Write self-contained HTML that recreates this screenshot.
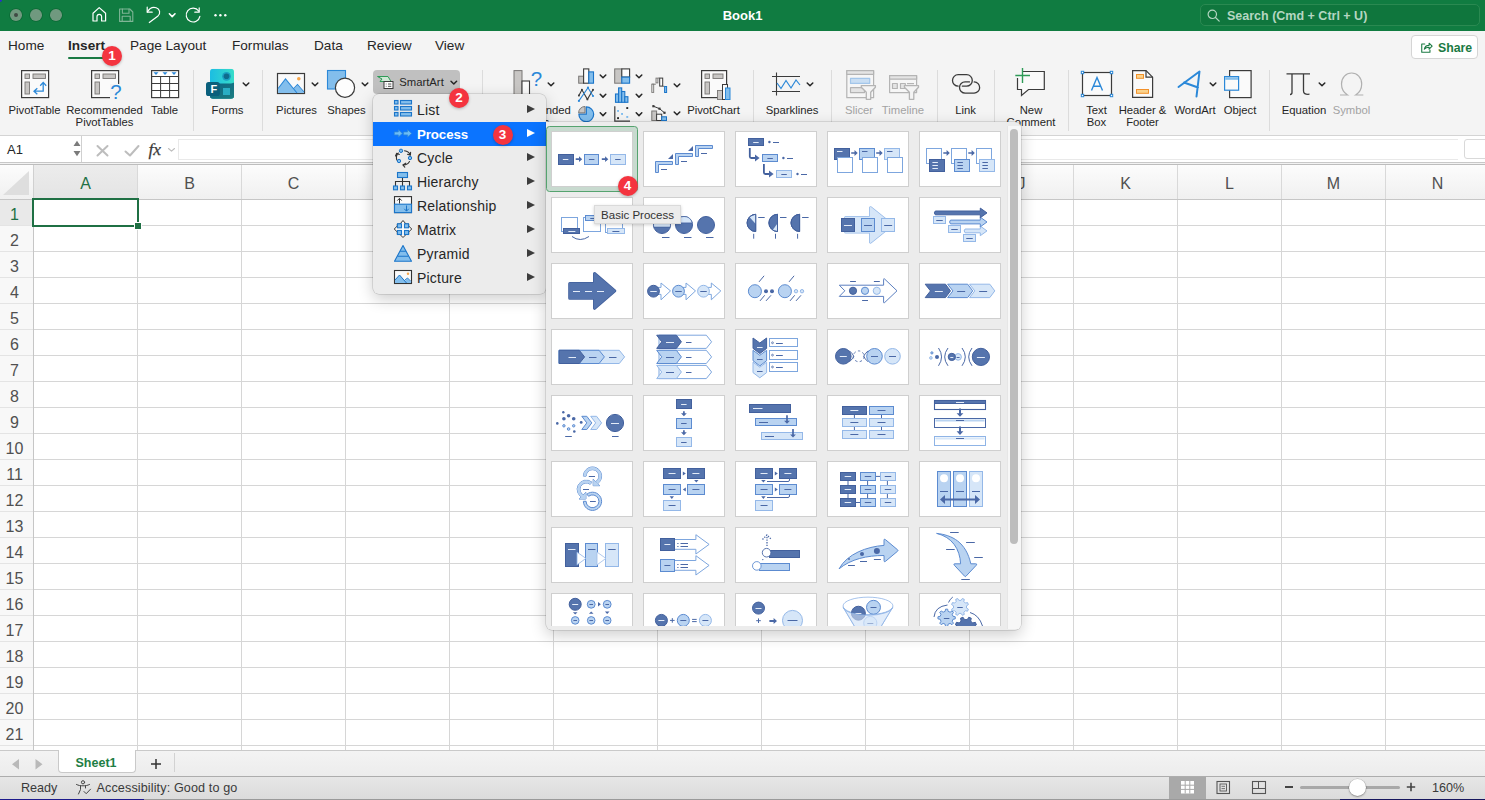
<!DOCTYPE html>
<html lang="en">
<head>
<meta charset="utf-8">
<title>Book1</title>
<style>
*{box-sizing:border-box;margin:0;padding:0}
html,body{width:1485px;height:800px;overflow:hidden;background:#f4f4f4}
body{font-family:"Liberation Sans",sans-serif;color:#262626;position:relative;font-size:12px}
.abs{position:absolute}
#titlebar{position:absolute;left:0;top:0;width:1485px;height:31px;background:#107c41}
#titlebar .tl{position:absolute;top:10px;width:11px;height:11px;border-radius:50%;background:#6f9c80}
#title{position:absolute;left:0;width:1485px;top:8px;text-align:center;color:#fff;font-weight:bold;font-size:13px;line-height:15px}
#search{position:absolute;left:1200px;top:4px;width:280px;height:22px;border-radius:5px;background:#0f763d;border:1px solid #2a8951}
#search span{position:absolute;left:26px;top:3.800px;font-size:12.5px;line-height:15px;font-weight:bold;color:#b5d6c2}
#tabs{position:absolute;left:0;top:31px;width:1485px;height:32px;background:#f4f4f4}
#tabs .t{position:absolute;top:7px;font-size:13.6px;line-height:16px;color:#262626;white-space:nowrap}
#ribbon{position:absolute;left:0;top:63px;width:1485px;height:73px;background:#f4f4f4;border-bottom:1px solid #d4d4d4}
.rl{position:absolute;font-size:11.3px;line-height:12px;color:#262626;text-align:center;white-space:nowrap;transform:translateX(-50%)}
.rl.dis{color:#a3a3a3}
.sep{position:absolute;top:70px;width:1px;height:61px;background:#dcdcdc}
.badge{position:absolute;width:20px;height:20px;margin:-.5px 0 0 -.5px;border-radius:50%;background:#f4343f;color:#fff;font-weight:bold;font-size:13.5px;line-height:20px;text-align:center;box-shadow:0 1px 3px rgba(0,0,0,.25)}
#fbar{position:absolute;left:0;top:136px;width:1485px;height:26px;background:#fff}
#namebox{position:absolute;left:0;top:0;width:82px;height:26px;background:#fff;border-right:1px solid #d0d0d0}
#namebox span{position:absolute;left:7px;top:5.5px;font-size:13px;line-height:15px;color:#262626}
#finput{position:absolute;left:178px;top:1px;width:1307px;height:25px;background:#fff;border-left:1px solid #dcdcdc}
#grid{position:absolute;left:0;top:165px;width:1485px;height:585px;background:#fff;overflow:hidden}
#colhdr{position:absolute;left:0;top:0;width:1485px;height:35px;background:linear-gradient(#fcfcfc,#f0f0f0);border-bottom:1px solid #c6c6c6}
#rowhdr{position:absolute;left:0;top:35px;width:34px;height:551px;background:#f8f8f8;border-right:1px solid #c6c6c6}
.ch{position:absolute;top:0;height:34px;width:104px;border-right:1px solid #d9d9d9;text-align:center;font-size:16px;line-height:38px;color:#505050}
.rh{position:absolute;left:0;width:33px;height:26px;border-bottom:1px solid #e4e4e4;text-align:center;text-indent:-4px;font-size:16px;line-height:29px;color:#505050}
#cells{position:absolute;left:34px;top:35px;width:1452px;height:551px;background-image:linear-gradient(to right,transparent 103px,#d6d6d6 103px),linear-gradient(to bottom,transparent 25px,#d6d6d6 25px);background-size:104px 26px,104px 26px}
#sel{position:absolute;left:32px;top:33px;width:107px;height:28.500px;border:2px solid #1f7044}
#selh{position:absolute;left:135px;top:58px;width:6px;height:6px;background:#1f7044;border:1px solid #fff;box-sizing:content-box;margin:-1px}
#sheetbar{position:absolute;left:0;top:750px;width:1485px;height:26px;background:linear-gradient(#f3f3f3,#ececec);border-top:1px solid #c9c9c9}
#sheettab{position:absolute;left:58px;top:-1px;width:78px;height:23px;background:#fff;border:1px solid #c9c9c9;border-top:none;border-radius:0 0 4px 4px;text-align:center;color:#1e7e45;font-weight:bold;font-size:12.5px;line-height:26px;text-indent:-2px}
#status{position:absolute;left:0;top:776px;width:1485px;height:24px;background:linear-gradient(#e6e6e6,#dbdbdb);border-top:1px solid #adadad}
#status .s{position:absolute;top:4px;font-size:12.6px;color:#4e4e4e;line-height:15px;color:#3a3a3a;white-space:nowrap}
#menu{position:absolute;left:373px;top:94px;width:173px;height:200px;background:#ececec;border-radius:6px;box-shadow:0 0 0 .5px rgba(0,0,0,.2),0 5px 16px rgba(0,0,0,.2)}
.mi{position:absolute;left:0;width:173px;height:24px}
.mi .lbl{position:absolute;left:44px;top:4px;font-size:14px;letter-spacing:.2px;line-height:17px;color:#262626;white-space:nowrap}
.mi .arr{position:absolute;left:154px;top:6.500px;width:0;height:0;border-left:8.700px solid #3d3d3d;border-top:4.700px solid transparent;border-bottom:4.700px solid transparent}
.mi.on{background:#0b74ff}
.mi.on .lbl{color:#fff;font-weight:bold;font-size:13.3px;letter-spacing:-.1px}
.mi.on .arr{border-left-color:#fff}
.mi svg{position:absolute;left:19px;top:2px}
#gal{position:absolute;left:546px;top:122px;width:475px;height:508px;background:#ececec;border-radius:0 6px 6px 6px;box-shadow:0 0 0 .5px rgba(0,0,0,.2),0 5px 16px rgba(0,0,0,.2);overflow:hidden}
.th{position:absolute;width:82px;height:56px;background:#fff;border:1px solid #cfcfcf}
.th svg{position:absolute;left:-1px;top:-1px}
#selth{position:absolute;left:0;top:1px;width:92px;height:66px;border-radius:3.500px;background:#c8dacf;border:1px solid #55a36f}
#sb{position:absolute;left:464px;top:7px;width:8px;height:415px;border-radius:4px;background:#bdbdbd}
#tip{position:absolute;left:594px;top:205px;width:87px;height:19px;background:#ececec;border:1px solid #dadada;box-shadow:0 1px 3px rgba(0,0,0,.18);font-size:11.5px;line-height:18px;color:#333;text-align:center;white-space:nowrap}
.D{fill:#5574ad;stroke:#42609d;stroke-width:1}
.M{fill:#b9d3f1;stroke:#5c8bd0;stroke-width:1}
.L{fill:#d6e6f8;stroke:#94b8e8;stroke-width:1}
.W{fill:#fff;stroke:#7da6de;stroke-width:1}
.k{fill:none;stroke:#4a68a6;stroke-width:1}
.k2{fill:none;stroke:#42609d;stroke-width:1.8}
.kw{fill:none;stroke:#e4ecf8;stroke-width:1}
.kf{fill:#4a68a6;stroke:none}
</style>
</head>
<body>
<div id="titlebar">
  <div class="tl" style="left:10.200px;top:9.200px;width:11.600px;height:11.600px;background:#70997f;box-shadow:0 0 0 .8px #0b6a35"><i style="position:absolute;left:3.800px;top:3.800px;width:4px;height:4px;border-radius:50%;background:#404a44"></i></div>
  <div class="tl" style="left:30.200px;top:9.200px;width:11.600px;height:11.600px;background:#70997f;box-shadow:0 0 0 .8px #0b6a35"></div>
  <div class="tl" style="left:50.200px;top:9.200px;width:11.600px;height:11.600px;background:#70997f;box-shadow:0 0 0 .8px #0b6a35"></div>
  <div class="abs" style="left:0;top:0;width:2px;height:2px;background:#2b2bd0;border-bottom-right-radius:2px"></div>
  <svg class="abs" style="left:88px;top:4px" width="144" height="24" viewBox="88 4 144 24" fill="none" stroke="#fff" stroke-width="1.200" stroke-linecap="round" stroke-linejoin="round">
    <path d="M93 21V13.2L99.2 7.6L105.6 13.2V21H101.6V16.6a2.3 2.3 0 0 0-4.6 0V21Z"/>
    <g stroke="#7fb596" stroke-width="1.1"><path d="M119.6 9h10.2l3 3v9.4h-13.2Z"/><path d="M122.4 9v4.2h6.6V9M122.2 21.4v-5.2h8v5.2"/></g>
    <path d="M147.200 7.200V12.200H152.200"/><path d="M147.400 12C149.600 8 153 6.700 156.200 7.700C160 9 160.800 13.200 158 15.900L149.300 22.500"/>
    <path d="M169.400 13.800l2.800 2.800l2.800-2.800" stroke-width="1.6"/>
    <path d="M199.200 7.900V12.200H194.800"/><path d="M199.900 16.400A6.900 6.900 0 1 1 198.700 11"/>
    <g fill="#fff" stroke="none"><circle cx="215.500" cy="15.200" r="1.200"/><circle cx="220.400" cy="15.200" r="1.200"/><circle cx="225.300" cy="15.200" r="1.200"/></g>
  </svg>
  <div id="title">Book1</div>
  <div id="search"><svg class="abs" style="left:4.500px;top:3px" width="16" height="16" viewBox="0 0 16 16" fill="none" stroke="#b5d6c2" stroke-width="1.200" stroke-linecap="round"><circle cx="6.300" cy="6.300" r="4.200"/><path d="M9.500 9.500l3.700 3.700"/></svg><span>Search (Cmd + Ctrl + U)</span></div>
</div>
<div id="tabs">
  <div class="t" style="left:8px">Home</div>
  <div class="t" style="left:68px;font-weight:bold">Insert</div>
  <div class="abs" style="left:68px;top:25.500px;width:38px;height:2.800px;border-radius:2px;background:#1a7a43"></div>
  <div class="t" style="left:130px">Page Layout</div>
  <div class="t" style="left:232px">Formulas</div>
  <div class="t" style="left:314px">Data</div>
  <div class="t" style="left:367px">Review</div>
  <div class="t" style="left:435px">View</div>
  <div class="abs" style="left:1411px;top:4px;width:67px;height:24px;background:#fff;border:1px solid #d5d5d5;border-radius:4px">
    <svg class="abs" style="left:8px;top:5px" width="13" height="13" viewBox="0 0 15 15" fill="none" stroke="#1a7a43" stroke-width="1.250" stroke-linejoin="round" stroke-linecap="round"><path d="M5.500 3.500H2v9.500h9.500V10.500"/><path d="M5 9.500c.5-3 2.500-4.500 5.500-4.500V2.500l3.500 3.500l-3.500 3.500V7.200C8 7.200 6.200 8 5 9.500Z"/></svg>
    <span class="abs" style="left:26px;top:4.500px;font-size:12.300px;line-height:15px;font-weight:bold;color:#1a7a43">Share</span>
  </div>
</div>
<div id="ribbon"></div>
<div class="abs" style="left:373px;top:70px;width:87px;height:24px;border-radius:4px;background:#c0c0c0"></div>
<svg class="abs" style="left:0;top:62px" width="1485" height="72" viewBox="0 62 1485 72" fill="none">
<!-- PivotTable -->
<g stroke="#3b3b3b" stroke-width="1.2">
<rect x="21.600" y="70.600" width="27" height="27" fill="#fafafa"/>
<rect x="91.600" y="70.600" width="27" height="27" fill="#fafafa"/>
<rect x="701.600" y="70.600" width="25" height="27" fill="#fafafa"/>
</g>
<g fill="#c8c6c4" stroke="#797775" stroke-width=".9">
<rect x="25" y="74" width="4.500" height="4.500"/><rect x="33" y="74" width="12.500" height="4.500"/><rect x="25" y="82" width="4.500" height="12"/>
<rect x="95" y="74" width="4.500" height="4.500"/><rect x="103" y="74" width="12.500" height="4.500"/><rect x="95" y="82" width="4.500" height="12"/>
<rect x="705" y="74" width="4.500" height="4.500"/><rect x="713" y="74" width="10" height="4.500"/><rect x="705" y="82" width="4.500" height="12"/>
</g>
<path d="M34.200 91.200H43.200V82.600M37.300 88.200L34 91.200L37.300 94.300M40.200 85.700L43.200 82.400L46.200 85.700" stroke="#2b88d8" stroke-width="1.300"/>
<rect x="110" y="84" width="14" height="16" fill="#f4f4f4"/>
<text x="110.200" y="99.300" font-family="Liberation Sans, sans-serif" font-size="20.500" fill="#2b88d8">?</text>
<!-- Table -->
<rect x="151.600" y="70.600" width="27" height="27" fill="#fff" stroke="#3b3b3b" stroke-width="1.200"/>
<path d="M151.600 76.500H178.600M151.600 83.500H178.600M151.600 90.500H178.600M160.600 76.500V97.600M169.600 76.500V97.600" stroke="#3b3b3b" stroke-width="1"/>
<path d="M153.500 72.300h5l-2.500 2.800zM162.500 72.300h5l-2.500 2.800zM171.500 72.300h5l-2.500 2.800z" fill="#2b88d8"/>
<!-- Forms -->
<defs><linearGradient id="fg1" x1="0" y1="0" x2="1" y2="0"><stop offset="0" stop-color="#1cbde2"/><stop offset="1" stop-color="#37dcc9"/></linearGradient><linearGradient id="fg2" x1="0" y1="0" x2="1" y2="1"><stop offset="0" stop-color="#0b6485"/><stop offset="1" stop-color="#1b7d80"/></linearGradient><clipPath id="fc"><rect x="210" y="68.800" width="24" height="30" rx="3.200"/></clipPath></defs>
<g clip-path="url(#fc)"><rect x="210" y="68.800" width="24" height="30" fill="url(#fg1)"/><path d="M210 84H234V82.600L230 84.500H210V98.800H234V84Z" fill="url(#fg2)"/><rect x="210" y="83.500" width="24" height="15.300" fill="url(#fg2)"/></g>
<circle cx="226.500" cy="76.300" r="4.400" fill="#1a9fc2"/><circle cx="226.500" cy="76.300" r="2.800" fill="#0e6b8d"/>
<rect x="223" y="88" width="7" height="7" fill="#29aec4"/>
<rect x="206" y="82" width="13.800" height="14" rx="2.600" fill="#0a5f7c"/>
<text x="210.600" y="93.200" font-family="Liberation Sans, sans-serif" font-weight="bold" font-size="11" fill="#fff">F</text>
<!-- Pictures -->
<rect x="277.500" y="73.500" width="27" height="20" fill="#fafafa" stroke="#3b3b3b" stroke-width="1.200"/>
<path d="M278.100 88.500L285.500 79L294 89.500L297.500 85L304 92.800V93H278.100Z" fill="#83beec"/>
<path d="M278.100 88.500L285.500 79L297 93M293.500 88.800L297.500 84.500L304 92" stroke="#2b88d8" stroke-width="1.100"/>
<circle cx="298.800" cy="78.800" r="1.800" fill="#f7a64a"/>
<!-- Shapes -->
<rect x="327.500" y="70.500" width="18" height="18.500" fill="#83beec" stroke="#2b88d8" stroke-width="1.100"/>
<circle cx="345" cy="87.700" r="9.600" fill="#fdfdfd" stroke="#3b3b3b" stroke-width="1.200"/>
<!-- SmartArt -->
<path d="M377.500 76.500H388L391 81.500H380L382 79Z" fill="#cfe8d6" stroke="#2e9b57" stroke-width="1"/>
<rect x="384" y="81.500" width="9" height="7" fill="#fff" stroke="#3b3b3b" stroke-width="1"/>
<path d="M385.800 84H386.500M388 84H391.300M385.800 86.300H386.500M388 86.300H391.300" stroke="#3b3b3b" stroke-width=".9"/>
<!-- chevrons -->
<g stroke="#262626" stroke-width="1.500" stroke-linecap="round" stroke-linejoin="round">
<path d="M243.200 83l2.800 2.800l2.800-2.800"/>
<path d="M312.200 83l2.800 2.800l2.800-2.800"/>
<path d="M362.200 83l2.800 2.800l2.800-2.800"/>
<path d="M451 81.200l2.800 2.800l2.800-2.800"/>
<path d="M548.200 83l2.800 2.800l2.800-2.800"/>
<path d="M600.200 75l2.800 2.800l2.800-2.800M600.200 94.300l2.800 2.800l2.800-2.800M600.200 112.800l2.800 2.800l2.800-2.800"/>
<path d="M636.200 75l2.800 2.800l2.800-2.800M636.200 94.300l2.800 2.800l2.800-2.800M636.200 112.800l2.800 2.800l2.800-2.800"/>
<path d="M674.200 84l2.800 2.800l2.800-2.800M674.200 112l2.800 2.800l2.800-2.800"/>
<path d="M807.200 83l2.800 2.800l2.800-2.800"/>
<path d="M1210.200 83l2.800 2.800l2.800-2.800"/>
<path d="M1319.200 83l2.800 2.800l2.800-2.800"/>
</g>
<!-- Recommended charts -->
<rect x="514" y="70.600" width="8" height="30" fill="#c8c6c4" stroke="#797775" stroke-width="1"/>
<rect x="522" y="81" width="7.500" height="20" fill="#fafafa" stroke="#3b3b3b" stroke-width="1.100"/>
<text x="530.700" y="86.300" font-family="Liberation Sans, sans-serif" font-size="20.500" fill="#2b88d8">?</text>
<!-- chart icons col1 -->
<rect x="578.700" y="76.200" width="4.900" height="7" fill="#c8c6c4" stroke="#797775" stroke-width="1"/>
<rect x="583.600" y="68.900" width="5.200" height="14.300" fill="#fdfdfd" stroke="#3b3b3b" stroke-width="1.100"/>
<rect x="588.800" y="71.900" width="4.700" height="11.300" fill="#83beec" stroke="#1b75c9" stroke-width="1.100"/>
<path d="M578.900 95.500L581.900 89.800L587.400 99.300L593 89.800" stroke="#3b3b3b" stroke-width="1.100"/>
<path d="M578.900 100.900L588 87.700L593 96" stroke="#2b88d8" stroke-width="1.100"/>
<g fill="#3b3b3b"><rect x="578" y="94.600" width="1.800" height="1.800"/><rect x="581" y="88.900" width="1.800" height="1.800"/><rect x="586.500" y="98.400" width="1.800" height="1.800"/><rect x="592.100" y="88.900" width="1.800" height="1.800"/></g>
<g fill="#2b88d8"><circle cx="578.900" cy="100.900" r="1.100"/><circle cx="588" cy="87.700" r="1.100"/><circle cx="593" cy="96" r="1.100"/></g>
<path d="M586.300 114.200V106.900A7.400 7.400 0 1 1 578.900 114.200Z" fill="#83beec" stroke="#1b75c9" stroke-width="1.200"/>
<path d="M585 112.900H578.600A6.400 6.400 0 0 1 585 106.500Z" fill="#c8c6c4" stroke="#797775" stroke-width="1"/>
<!-- col2 -->
<rect x="614.700" y="68.900" width="7.100" height="14.300" fill="#c8c6c4" stroke="#797775" stroke-width="1"/>
<rect x="621.800" y="68.900" width="7.800" height="8.200" fill="#fdfdfd" stroke="#3b3b3b" stroke-width="1.100"/>
<rect x="621.800" y="77.100" width="7.800" height="6.100" fill="#83beec" stroke="#1b75c9" stroke-width="1.100"/>
<g fill="#83beec" stroke="#1b75c9" stroke-width="1.100"><rect x="615.500" y="94" width="3.100" height="8.300"/><rect x="618.600" y="87.900" width="3.100" height="14.400"/><rect x="621.700" y="91.500" width="3.100" height="10.800"/><rect x="624.800" y="96.700" width="3.100" height="5.600"/></g>
<path d="M614.800 106.300V121.100H630" stroke="#3b3b3b" stroke-width="1.200"/>
<g fill="#7fbdf0"><rect x="617.100" y="110" width="1.900" height="1.900"/><rect x="621.100" y="113" width="1.900" height="1.900"/><rect x="626.300" y="116" width="1.900" height="1.900"/></g>
<g fill="#262626"><rect x="626.300" y="107.100" width="1.900" height="1.900"/><rect x="617.100" y="117.200" width="1.900" height="1.900"/></g>
<!-- col3 waterfall -->
<path d="M651.800 84.200H655.800M658.100 78.100H659.500M662.800 86.300H664.500" stroke="#797775" stroke-width="1"/>
<rect x="651.800" y="84.200" width="1.900" height="8.200" fill="#e6e6e6" stroke="#797775" stroke-width=".9"/>
<rect x="656" y="78.100" width="1.900" height="4.800" fill="#e6e6e6" stroke="#797775" stroke-width=".9"/>
<rect x="659.700" y="78.100" width="3" height="8" fill="#fdfdfd" stroke="#3b3b3b" stroke-width="1"/>
<rect x="664.600" y="86.500" width="2" height="6" fill="#83beec" stroke="#1b75c9" stroke-width="1"/>
<!-- combo -->
<rect x="651.800" y="111" width="4.800" height="9.500" fill="#c8c6c4" stroke="#797775" stroke-width="1"/>
<rect x="656.600" y="114.200" width="5.100" height="6.300" fill="#fdfdfd" stroke="#3b3b3b" stroke-width="1"/>
<rect x="661.700" y="116.800" width="4.800" height="3.700" fill="#83beec" stroke="#1b75c9" stroke-width="1"/>
<path d="M653.400 106.200L659.500 108.700L664.500 112.800" stroke="#3b3b3b" stroke-width="1"/>
<g fill="#3b3b3b"><rect x="652.300" y="105.100" width="2.200" height="2.200"/><rect x="658.400" y="107.600" width="2.200" height="2.200"/><rect x="663.400" y="111.700" width="2.200" height="2.200"/></g>
<!-- PivotChart bars -->
<rect x="717.500" y="90.500" width="5" height="9" fill="#c8c6c4" stroke="#797775" stroke-width=".9"/>
<rect x="722.500" y="84.500" width="5" height="15" fill="#fafafa" stroke="#3b3b3b" stroke-width="1"/>
<rect x="725.500" y="88" width="4.500" height="11.500" fill="#83beec" stroke="#2b88d8" stroke-width="1"/>
<!-- Sparklines -->
<path d="M776.500 72.500V95.500M772 76.500H800M772 91.500H800" stroke="#3b3b3b" stroke-width="1.100"/>
<path d="M777 83L781 88.500L786 80.500L791 88L796 80L800 85" stroke="#2b88d8" stroke-width="1.200"/>
<!-- Slicer -->
<g stroke="#b4b4b4" stroke-width="1.200" stroke-linejoin="round">
<rect x="846.800" y="70.700" width="26.800" height="27" fill="#f6f6f6"/>
<rect x="846.800" y="70.700" width="26.800" height="3.600" fill="#e4e4e4"/>
<rect x="850.500" y="78.400" width="19.200" height="5" fill="#c9def3" stroke="#a3c6ea"/>
<rect x="850.500" y="87.600" width="14" height="5" fill="#e4e4e4"/>
<path d="M861.300 85.600H875.400V87.200L870.700 92.200V99.300H866.300V92.200L861.300 87.200Z" fill="#f4f4f4" stroke-width="1.300"/>
<rect x="889.600" y="75.600" width="27" height="17" fill="#f6f6f6"/>
<rect x="889.600" y="75.600" width="27" height="3.600" fill="#e4e4e4"/>
<rect x="892.500" y="83.500" width="4.800" height="5" fill="#e4e4e4"/><rect x="900.500" y="83.500" width="4.800" height="5" fill="#e4e4e4"/><path d="M907 83.600H914"/>
<path d="M904.400 85.600H918.500V87.200L913.800 92.200V99.300H909.400V92.200L904.400 87.200Z" fill="#f4f4f4" stroke-width="1.300"/>
</g>
<!-- Link -->
<g stroke="#3b3b3b" stroke-width="1.300" stroke-linecap="round">
<path d="M958.200 86.100A5.700 5.700 0 0 1 958.200 74.700H966.600A5.700 5.700 0 0 1 966.600 86.100H962.300"/>
<path d="M969.500 81.900H965.100A5.600 5.600 0 0 0 965.100 93.100H973.900A5.600 5.600 0 0 0 974.200 81.900"/>
</g>
<!-- New comment -->
<path d="M1022 71.500H1044.300V89.500H1028.500L1021.500 95.500V89.500H1017.500V78" stroke="#3b3b3b" stroke-width="1.200" fill="#fafafa"/>
<path d="M1022.500 68V83M1015.300 75.500H1030" stroke="#2e9b57" stroke-width="1.400"/>
<!-- Text box -->
<rect x="1082.500" y="72.500" width="29" height="23" fill="#fafafa" stroke="#3b3b3b" stroke-width="1.200"/>
<g fill="#fff" stroke="#2b88d8" stroke-width="1"><rect x="1081.300" y="71.300" width="2.400" height="2.400"/><rect x="1110.300" y="71.300" width="2.400" height="2.400"/><rect x="1081.300" y="94.300" width="2.400" height="2.400"/><rect x="1110.300" y="94.300" width="2.400" height="2.400"/></g>
<path d="M1091.500 90.500L1097 77.500L1102.500 90.500M1093.300 86.300H1100.700" stroke="#2b88d8" stroke-width="1.400"/>
<!-- Header footer -->
<path d="M1132.600 70.600H1146L1152.600 77.200V97.400H1132.600Z" fill="#fafafa" stroke="#3b3b3b" stroke-width="1.200"/>
<path d="M1146 70.600V77.200H1152.600" stroke="#3b3b3b" stroke-width="1.200"/>
<rect x="1136.500" y="74.500" width="7" height="3.800" fill="#fbd38d" stroke="#f2912b" stroke-width="1"/>
<rect x="1136.500" y="89.500" width="12" height="3.800" fill="#fbd38d" stroke="#f2912b" stroke-width="1"/>
<!-- WordArt -->
<path d="M1178.500 87L1199.500 71.500L1196.500 96.500M1184 82.500L1198 87.500" stroke="#2b88d8" stroke-width="2" stroke-linecap="round" stroke-linejoin="round"/>
<!-- Object -->
<rect x="1229.600" y="70.600" width="21.500" height="27" fill="#fafafa" stroke="#3b3b3b" stroke-width="1.200"/>
<rect x="1224.600" y="76.600" width="14" height="13.600" fill="#fafafa" stroke="#2b88d8" stroke-width="1.200"/>
<rect x="1225.200" y="77.200" width="12.800" height="2.600" fill="#83beec"/>
<!-- Equation -->
<path d="M1286.500 73.800H1310M1292 73.800V92.500C1292 94 1291 94.500 1290 94.500M1303.500 73.800V91C1303.500 93.500 1305 94.600 1309.500 94.200" stroke="#3b3b3b" stroke-width="1.300"/>
<!-- Symbol -->
<path d="M1340 95H1347.500C1343.500 92.500 1341.500 88.500 1341.500 84C1341.500 77.500 1346 73 1351.600 73C1357.200 73 1361.700 77.500 1361.700 84C1361.700 88.500 1359.700 92.500 1355.700 95H1363.300" stroke="#b0b0b0" stroke-width="1.200"/>
</svg>
<div class="sep" style="left:193px"></div><div class="sep" style="left:262px"></div><div class="sep" style="left:482px"></div><div class="sep" style="left:753px"></div><div class="sep" style="left:831px"></div><div class="sep" style="left:937px"></div><div class="sep" style="left:994px"></div><div class="sep" style="left:1068px"></div><div class="sep" style="left:1269px"></div>
<div class="rl" style="left:34.500px;top:104px">PivotTable</div>
<div class="rl" style="left:104.500px;top:104px">Recommended<br>PivotTables</div>
<div class="rl" style="left:164.500px;top:104px">Table</div>
<div class="rl" style="left:227.500px;top:104px">Forms</div>
<div class="rl" style="left:296.500px;top:104px">Pictures</div>
<div class="rl" style="left:346.500px;top:104px">Shapes</div>
<div class="rl" style="left:421.500px;top:76px">SmartArt</div>
<div class="rl" style="left:532.500px;top:104px">Recommended<br>Charts</div>
<div class="rl" style="left:713.500px;top:104px">PivotChart</div>
<div class="rl" style="left:792px;top:104px">Sparklines</div>
<div class="rl dis" style="left:859px;top:104px">Slicer</div>
<div class="rl dis" style="left:903px;top:104px">Timeline</div>
<div class="rl" style="left:965.500px;top:104px">Link</div>
<div class="rl" style="left:1031px;top:104px">New<br>Comment</div>
<div class="rl" style="left:1096.500px;top:104px">Text<br>Box</div>
<div class="rl" style="left:1142.500px;top:104px">Header &amp;<br>Footer</div>
<div class="rl" style="left:1195px;top:104px">WordArt</div>
<div class="rl" style="left:1240px;top:104px">Object</div>
<div class="rl" style="left:1304px;top:104px">Equation</div>
<div class="rl dis" style="left:1351.500px;top:104px">Symbol</div>
<div class="badge" style="left:102.500px;top:46px">1</div>
<div class="badge" style="left:449.500px;top:88.500px;z-index:30">2</div>
<div id="fbar">
  <div id="namebox"><span>A1</span>
    <svg class="abs" style="left:73px;top:4px" width="8" height="17" viewBox="0 0 8 17"><path d="M.5 6L4 .8L7.500 6ZM.5 11L4 16.200L7.500 11Z" fill="#7b7b7b"/></svg>
  </div>
  
  <svg class="abs" style="left:95px;top:7px" width="85" height="16" viewBox="95 143 85 16" fill="none" stroke-linecap="round" stroke-linejoin="round">
    <path d="M97.500 146L107.500 155.500M107.500 146L97.500 155.500" stroke="#bdbdbd" stroke-width="2"/>
    <path d="M125.500 151.500L130 155.500L138.500 146" stroke="#bdbdbd" stroke-width="2"/>
    <path d="M168.500 148.500L171.500 151.200L174.500 148.500" stroke="#bdbdbd" stroke-width="1.100"/>
  </svg>
  <div class="abs" style="left:148.500px;top:2px;font-family:'Liberation Serif',serif;font-style:italic;font-size:17.5px;line-height:22px;color:#3a3a3a;letter-spacing:-.2px;-webkit-text-stroke:.25px #3a3a3a">fx</div>
  <div class="abs" style="left:178px;top:3px;width:1280px;height:21px;border:1px solid #e9e9e9;border-right:none;background:#fff"></div>
  <div class="abs" style="left:1464px;top:3px;width:22px;height:20px;border:1px solid #d9d9d9;border-radius:3px 0 0 3px;background:#fff"></div>
</div>
<div class="abs" style="left:0;top:162px;width:1485px;height:3px;background:#f2f2f2;border-top:1px solid #c8c8c8;border-bottom:1px solid #bdbdbd"></div>
<div id="grid">
  <div id="colhdr">
    <svg class="abs" style="left:0;top:0" width="33" height="34"><path d="M29 6V30H3Z" fill="#dedede"/></svg>
    <div class="abs" style="left:33px;top:0;width:1px;height:35px;background:#d0d0d0"></div>
    <div class="ch" style="left:34px;background:linear-gradient(#ececec,#e4e4e4);color:#1f7044">A</div>
    <div class="ch" style="left:138px">B</div>
    <div class="ch" style="left:242px">C</div>
    <div class="ch" style="left:346px">D</div>
    <div class="ch" style="left:450px">E</div>
    <div class="ch" style="left:554px">F</div>
    <div class="ch" style="left:658px">G</div>
    <div class="ch" style="left:762px">H</div>
    <div class="ch" style="left:866px">I</div>
    <div class="ch" style="left:970px">J</div>
    <div class="ch" style="left:1074px">K</div>
    <div class="ch" style="left:1178px">L</div>
    <div class="ch" style="left:1282px">M</div>
    <div class="ch" style="left:1386px">N</div>
  </div>
  <div id="cells"></div>
  <div id="rowhdr"><div class="rh" style="top:0px;background:#e9e9e9;color:#1f7044">1</div><div class="rh" style="top:26px">2</div><div class="rh" style="top:52px">3</div><div class="rh" style="top:78px">4</div><div class="rh" style="top:104px">5</div><div class="rh" style="top:130px">6</div><div class="rh" style="top:156px">7</div><div class="rh" style="top:182px">8</div><div class="rh" style="top:208px">9</div><div class="rh" style="top:234px">10</div><div class="rh" style="top:260px">11</div><div class="rh" style="top:286px">12</div><div class="rh" style="top:312px">13</div><div class="rh" style="top:338px">14</div><div class="rh" style="top:364px">15</div><div class="rh" style="top:390px">16</div><div class="rh" style="top:416px">17</div><div class="rh" style="top:442px">18</div><div class="rh" style="top:468px">19</div><div class="rh" style="top:494px">20</div><div class="rh" style="top:520px">21</div><div class="rh" style="top:546px">22</div></div>
  <div id="sel"></div><div id="selh"></div>
</div>
<div id="sheetbar">
  <svg class="abs" style="left:8px;top:6px" width="40" height="14" viewBox="8 757 40 14"><path d="M19 759V769.500L12 764.200ZM35.500 759V769.500L42.500 764.200Z" fill="#b9b9b9"/></svg>
  <div id="sheettab">Sheet1</div>
  <svg class="abs" style="left:150px;top:7px" width="12" height="12" viewBox="0 0 12 12"><path d="M6 1V11M1 6H11" stroke="#333" stroke-width="1.500"/></svg>
  <div class="abs" style="left:174px;top:2px;width:1px;height:19px;background:#d2d2d2"></div>
</div>
<div id="status">
  <div class="s" style="left:21px">Ready</div>
  <svg class="abs" style="left:75px;top:3px" width="18" height="17" viewBox="75 780 18 17" fill="none" stroke="#444" stroke-width="1" stroke-linecap="round" stroke-linejoin="round">
    <circle cx="83" cy="782.300" r="1.600"/><path d="M76.500 784.500c2 1 4 1.300 6.500 1.300s4.500-.3 6.500-1.300M80.500 786v3.500l-2 4.500M85.500 786v2"/><path d="M84 791.500l2.200 2.200l4.300-4.500"/>
  </svg>
  <div class="s" style="left:96.500px;letter-spacing:.12px">Accessibility: Good to go</div>
  <div class="abs" style="left:1169px;top:0;width:37px;height:23px;background:#a9a9a9"></div>
  <svg class="abs" style="left:1169px;top:0" width="110" height="23" viewBox="1169 777 110 23" fill="none">
    <rect x="1181" y="781" width="13" height="12.500" fill="#fff"/>
    <path d="M1185.200 781V793.500M1189.800 781V793.500M1181 785.200H1194M1181 789.400H1194" stroke="#a9a9a9" stroke-width="1"/>
    <rect x="1217" y="781.500" width="12.500" height="12" stroke="#555" stroke-width="1.100"/>
    <rect x="1220" y="784" width="6.500" height="7" stroke="#555" stroke-width=".9"/><path d="M1221.500 786.300H1225M1221.500 788.600H1225" stroke="#555" stroke-width=".8"/>
    <rect x="1252.500" y="781.500" width="13" height="12" stroke="#555" stroke-width="1.100"/>
    <path d="M1252.500 788.500H1265.500M1258.500 781.500V788.500" stroke="#555" stroke-width="1"/>
  </svg>
  <div class="abs" style="left:1285px;top:9px;width:8px;height:2px;background:#444"></div>
  <div class="abs" style="left:1300px;top:9px;width:100px;height:3px;border-radius:2px;background:#a8a8a8"></div>
  <div class="abs" style="left:1349px;top:2px;width:17px;height:17px;border-radius:50%;background:#fff;box-shadow:0 0 0 .5px rgba(0,0,0,.18),0 1px 2px rgba(0,0,0,.3)"></div>
  <svg class="abs" style="left:1406px;top:5px" width="10" height="10" viewBox="0 0 10 10"><path d="M5 .8V9.200M.8 5H9.200" stroke="#444" stroke-width="1.600"/></svg>
  <div class="s" style="left:1432px">160%</div>
</div>
<div class="abs" style="left:0;top:799px;width:144px;height:1px;background:#1c1a8c"></div>
<div class="abs" style="left:144px;top:799px;width:1196px;height:1px;background:#9a9a9a"></div>
<div class="abs" style="left:1340px;top:799px;width:145px;height:1px;background:#17175e"></div>
<div id="menu">
  <div class="mi" style="top:4px"><span class="lbl">List</span><i class="arr"></i></div>
  <div class="mi on" style="top:28px"><span class="lbl">Process</span><i class="arr"></i></div>
  <div class="mi" style="top:52px"><span class="lbl">Cycle</span><i class="arr"></i></div>
  <div class="mi" style="top:76px"><span class="lbl">Hierarchy</span><i class="arr"></i></div>
  <div class="mi" style="top:100px"><span class="lbl">Relationship</span><i class="arr"></i></div>
  <div class="mi" style="top:124px"><span class="lbl">Matrix</span><i class="arr"></i></div>
  <div class="mi" style="top:148px"><span class="lbl">Pyramid</span><i class="arr"></i></div>
  <div class="mi" style="top:172px"><span class="lbl">Picture</span><i class="arr"></i></div>
  <svg class="abs" style="left:17px;top:4px" width="26" height="192" viewBox="390 98 26 192" fill="none">
    <!-- list -->
    <g fill="#83beec" stroke="#1b75c9" stroke-width="1.100">
      <rect x="394.500" y="100.500" width="3.500" height="3.500"/><rect x="400.500" y="100.500" width="11" height="3.500"/>
      <rect x="394.500" y="106.500" width="3.500" height="3.500"/><rect x="400.500" y="106.500" width="11" height="3.500"/>
      <rect x="394.500" y="112.500" width="3.500" height="3.500"/><rect x="400.500" y="112.500" width="11" height="3.500"/>
    </g>
    <!-- process -->
    <path d="M394.300 131.900H398.300V129.700L402.400 133.400L398.300 137.100V134.900H394.300ZM403.600 131.900H407.600V129.700L411.700 133.400L407.600 137.100V134.900H403.600Z" fill="#6cbcf6" stroke="#2f86d8" stroke-width=".8"/>
    <!-- cycle -->
    <g stroke="#333" stroke-width="1.100" stroke-linecap="round" stroke-linejoin="round">
      <path d="M404.500 150.800c3 .4 5 2 5.800 4.300M410.600 152.200l-.2 3l-2.900-.9"/>
      <path d="M409.500 161.500c-1.500 2.500-4 3.700-6.500 3.500M405.800 163.200l-3 1.800l2 2.200"/>
      <path d="M396.800 159.500c-.8-2.500-.3-5 1.500-7M395.500 155.500l1.200-2.800l2.600 1.300" transform="translate(0 .5)"/>
    </g>
    <g fill="#83beec" stroke="#1b75c9" stroke-width="1"><circle cx="401" cy="150.800" r="1.700"/><circle cx="410" cy="158" r="1.700"/><circle cx="399" cy="161" r="1.700"/></g>
    <!-- hierarchy -->
    <path d="M402.500 177.500V181.500M395.500 186V181.500H409.500V186M402.500 181.500V186" stroke="#333" stroke-width="1.100"/>
    <g fill="#83beec" stroke="#1b75c9" stroke-width="1.100"><rect x="397.500" y="172.500" width="10" height="5"/><rect x="393.500" y="186" width="4" height="3.800"/><rect x="400.500" y="186" width="4" height="3.800"/><rect x="407.500" y="186" width="4" height="3.800"/></g>
    <!-- relationship -->
    <rect x="394.500" y="196.600" width="17" height="16" fill="#fafafa" stroke="#333" stroke-width="1.100"/>
    <rect x="394.500" y="204.200" width="17" height="8.400" fill="#83beec" stroke="#1b75c9" stroke-width="1.100"/>
    <path d="M399.500 203.500V198.500M397.300 200.600L399.500 198.300L401.700 200.600" stroke="#333" stroke-width="1"/>
    <path d="M406.500 205.500V211M404.300 208.800L406.500 211.200L408.700 208.800" stroke="#1b75c9" stroke-width="1"/>
    <!-- matrix -->
    <path d="M394.300 229L397.300 226V224H400L403 220.500L406 224H408.700V226L411.700 229L408.700 232V234.500H406L403 237.500L400 234.500H397.300V232Z" fill="#fafafa" stroke="#333" stroke-width="1"/>
    <g fill="#83beec" stroke="#1b75c9" stroke-width="1.100"><rect x="397.500" y="223.800" width="4" height="4"/><rect x="404.500" y="223.800" width="4" height="4"/><rect x="397.500" y="230.500" width="4" height="4"/><rect x="404.500" y="230.500" width="4" height="4"/></g>
    <!-- pyramid -->
    <path d="M403 245.500L411.500 261.300H394.500Z" fill="#83beec" stroke="#1b75c9" stroke-width="1.100" stroke-linejoin="round"/>
    <path d="M400.200 251.200H405.800M397.600 256.200H408.400" stroke="#1b75c9" stroke-width="1.100"/>
    <!-- picture -->
    <rect x="394.500" y="270.500" width="17" height="13" fill="#fafafa" stroke="#333" stroke-width="1.100"/>
    <path d="M395 280L399.500 275L405 281L407.500 278.500L411 282V283H395Z" fill="#83beec"/>
    <path d="M395 280L399.500 275L406.500 283M404.500 280.500L407.500 278L411 281.500" stroke="#1b75c9" stroke-width="1"/>
    <circle cx="408" cy="273.800" r="1.200" fill="#f7a64a"/>
  </svg>
  <div class="badge" style="left:120px;top:31px">3</div>
</div>
<div id="gal">
<div class="abs" style="left:461px;top:4px;width:14px;height:503px;background:#f7f7f7;border-left:1px solid #e6e6e6"></div>
<div id="sb"></div>
<div id="galclip" style="position:absolute;left:0;top:3px;width:461px;height:501px;overflow:hidden">
<div id="selth"></div>
<div class="th" style="left:5px;top:6px"><svg width="82" height="56" viewBox="0 0 82 56"><rect class="D" x="7.5" y="23.5" width="15" height="10"/><path class="kw" d="M11.85 28.5H17.35"/><path class="kf" d="M24.7 27.35H28V25.3L31.2 28.2L28 31.1V29.05H24.7Z"/><rect class="M" x="33.5" y="23.5" width="14" height="10"/><path class="k" d="M37.9 28.5H43.4"/><path class="kf" d="M50.8 27.35H54.1V25.3L57.3 28.2L54.1 31.1V29.05H50.8Z"/><rect class="L" x="59.5" y="23.5" width="15" height="10"/><path class="k" d="M64.15 28.5H69.65"/></svg></div>
<div class="th" style="left:97px;top:6px"><svg width="82" height="56" viewBox="0 0 82 56"><path class="M" d="M12.5 30.5H29.5V33.5H15.5V41.5H12.5Z"/><path class="k" d="M18 38.5H24"/><path class="M" d="M32.5 22.5H49.5V25.5H35.5V33.5H32.5Z"/><path class="k" d="M38 30.5H44"/><path class="M" d="M52.5 14.5H69.5V17.5H55.5V25.5H52.5Z"/><path class="k" d="M58 22.5H64"/><path class="kf" d="M30 23.1L30 27.9L25 27.9Z"/><path class="kf" d="M50 15.1L50 19.9L45 19.9Z"/></svg></div>
<div class="th" style="left:189px;top:6px"><svg width="82" height="56" viewBox="0 0 82 56"><rect class="D" x="13.5" y="7.5" width="15" height="7"/><path class="kw" d="M18.2 11.5H23.7"/><circle class="kf" cx="34.4" cy="11" r="1.2"/><path class="k" d="M38 11.5H44"/><rect class="M" x="27.5" y="23.5" width="15" height="7"/><path class="k" d="M32.35 27.5H37.85"/><circle class="kf" cx="48.4" cy="27" r="1.2"/><path class="k" d="M52 27.5H58"/><rect class="L" x="41.5" y="39.5" width="15" height="7"/><path class="k" d="M46.3 43.5H51.8"/><circle class="kf" cx="62.5" cy="43" r="1.2"/><path class="k" d="M66 43.5H72"/><path class="k2" d="M14.8 17V25.5Q14.8 27 16.3 27H20.5"/><path class="kf" d="M20 23.6L24.6 27L20 30.4Z"/><path class="k2" d="M28.9 33V41.5Q28.9 43 30.4 43H34.5"/><path class="kf" d="M34 39.6L38.6 43L34 46.4Z"/></svg></div>
<div class="th" style="left:281px;top:6px"><svg width="82" height="56" viewBox="0 0 82 56"><rect class="D" x="7.5" y="17.5" width="15" height="11"/><path class="kw" d="M10 20.5H15.5"/><rect class="W" x="10.5" y="26.5" width="15" height="15"/><path class="kf" d="M24.2 21.15H27.5V19.1L30.7 22L27.5 24.9V22.85H24.2Z"/><rect class="M" x="32.5" y="17.5" width="15" height="11"/><path class="k" d="M35 20.5H40.5"/><rect class="W" x="35.5" y="26.5" width="15" height="15"/><path class="kf" d="M49.2 21.15H52.5V19.1L55.7 22L52.5 24.9V22.85H49.2Z"/><rect class="L" x="57.5" y="17.5" width="15" height="11"/><path class="k" d="M60 20.5H65.5"/><rect class="W" x="60.5" y="26.5" width="15" height="15"/></svg></div>
<div class="th" style="left:373px;top:6px"><svg width="82" height="56" viewBox="0 0 82 56"><rect class="W" x="7.5" y="17.5" width="15" height="15"/><rect class="D" x="10.5" y="28.5" width="15" height="12"/><path class="kw" d="M13.4 31.5H18.9"/><path class="kw" d="M13.4 34.5H18.9"/><path class="kw" d="M13.4 37.5H18.9"/><path class="kf" d="M24.3 21.15H27.6V19.1L30.8 22L27.6 24.9V22.85H24.3Z"/><rect class="W" x="32.5" y="17.5" width="15" height="15"/><rect class="M" x="35.5" y="28.5" width="15" height="12"/><path class="k" d="M38.4 31.5H43.9"/><path class="k" d="M38.4 34.5H43.9"/><path class="k" d="M38.4 37.5H43.9"/><path class="kf" d="M49.3 21.15H52.6V19.1L55.8 22L52.6 24.9V22.85H49.3Z"/><rect class="W" x="57.5" y="17.5" width="15" height="15"/><rect class="L" x="60.5" y="28.5" width="15" height="12"/><path class="k" d="M63.4 31.5H68.9"/><path class="k" d="M63.4 34.5H68.9"/><path class="k" d="M63.4 37.5H68.9"/></svg></div>
<div class="th" style="left:5px;top:72px"><svg width="82" height="56" viewBox="0 0 82 56"><rect class="W" x="10.5" y="20.5" width="16" height="14"/><rect class="D" x="12.5" y="31.5" width="16" height="5"/><path class="kw" d="M17.35 34.5H24.35"/><path class="k" d="M21 39.5Q29 45.5 38 39.5"/><rect class="W" x="32.5" y="20.5" width="17" height="14"/><rect class="M" x="34.5" y="18.5" width="17" height="5"/><path class="k" d="M39.25 21.5H46.25"/><rect class="W" x="54.5" y="20.5" width="17" height="15"/><rect class="L" x="56.5" y="31.5" width="17" height="5"/><path class="k" d="M61.4 34.5H68.4"/></svg></div>
<div class="th" style="left:97px;top:72px"><svg width="82" height="56" viewBox="0 0 82 56"><circle class="D" cx="19" cy="28" r="8.5"/><path class="L" d="M10.760 30.100A8.500 8.500 0 1 1 27.240 30.100Z" style="stroke:#42609d;stroke-width:.7"/><circle class="D" cx="41" cy="28" r="8.5"/><path class="L" d="M32.760 25.900A8.500 8.500 0 0 1 49.240 25.900Z" style="stroke:#42609d;stroke-width:.7"/><circle class="D" cx="63" cy="28" r="8.5"/><path class="k" d="M19 40.5H26.5"/><path class="k" d="M41 40.5H48.5"/><path class="k" d="M63 40.5H70.5"/></svg></div>
<div class="th" style="left:189px;top:72px"><svg width="82" height="56" viewBox="0 0 82 56"><path class="D" d="M20.7 17.3A8.6 8.6 0 0 0 20.7 34.5Z"/><path class="L" d="M20.7 17.6L20.7 26.9L14.5 20.1Z" style="stroke:none"/><path class="D" d="M20.7 17.3A8.6 8.6 0 0 0 20.7 34.5Z" style="fill:none"/><path class="k" d="M23.2 20.5H29.7"/><path class="k" d="M18.7 36.8V41.7"/><path class="D" d="M42.5 17.3A8.6 8.6 0 0 0 42.5 34.5Z"/><path class="L" d="M42.5 34.2L42.5 26.4L37.7 32.9Z" style="stroke:none"/><path class="D" d="M42.5 17.3A8.6 8.6 0 0 0 42.5 34.5Z" style="fill:none"/><path class="k" d="M45 20.5H51.5"/><path class="k" d="M40.5 36.8V41.7"/><path class="D" d="M64.6 17.3A8.6 8.6 0 0 0 64.6 34.5Z"/><path class="D" d="M64.6 17.3A8.6 8.6 0 0 0 64.6 34.5Z" style="fill:none"/><path class="k" d="M67.1 20.5H73.6"/><path class="k" d="M62.6 36.8V41.7"/></svg></div>
<div class="th" style="left:281px;top:72px"><svg width="82" height="56" viewBox="0 0 82 56"><path d="M18.7 20.5H43.5V10.7L65 27.9L43.5 45.1V35H18.7Z" fill="#d6e6f8" stroke="#94b8e8" stroke-width="3" stroke-linejoin="round"/><path d="M18.7 20.5H43.5V10.7L65 27.9L43.5 45.1V35H18.7Z" fill="#d6e6f8" stroke="#d6e6f8" stroke-width="1.5" stroke-linejoin="round"/><rect class="D" x="14.5" y="21.5" width="13" height="13"/><path class="kw" d="M16.95 28.5H24.95"/><rect class="M" x="34.5" y="21.5" width="13" height="13"/><path class="k" d="M37 28.5H45"/><rect class="L" x="54.5" y="21.5" width="13" height="13"/><path class="k" d="M57.15 28.5H65.15"/></svg></div>
<div class="th" style="left:373px;top:72px"><svg width="82" height="56" viewBox="0 0 82 56"><path class="L" d="M46.1 32H61.3V29.1L68 33.9L61.3 38.7V35.8H46.1Q44.2 33.9 46.1 32Z"/><path class="M" d="M31.5 23.1H61.3V20.2L68 25L61.3 29.8V26.9H31.5Q29.6 25 31.5 23.1Z"/><path class="D" d="M16.3 14H61.3V11.1L68 15.9L61.3 20.7V17.8H16.3Q14.4 15.9 16.3 14Z"/><rect class="L" x="14.5" y="19.5" width="12" height="7"/><path class="k" d="M17.25 23.5H23.75"/><rect class="L" x="29.5" y="28.5" width="12" height="7"/><path class="k" d="M32.25 32.5H38.75"/><rect class="L" x="44.5" y="37.5" width="12" height="7"/><path class="k" d="M47.25 41.5H53.75"/></svg></div>
<div class="th" style="left:5px;top:138px"><svg width="82" height="56" viewBox="0 0 82 56"><path d="M18.7 20.5H43.5V10.5L63.8 27.9L43.5 45.3V35.3H18.7Z" fill="#5574ad" stroke="#42609d" stroke-width="3" stroke-linejoin="round"/><path d="M18.7 20.5H43.5V10.5L63.8 27.9L43.5 45.3V35.3H18.7Z" fill="#5574ad" stroke="#5574ad" stroke-width="1.5" stroke-linejoin="round"/><path class="kw" d="M22 28.5H29"/><path class="kw" d="M34 28.5H41"/><path class="kw" d="M46 28.5H53"/></svg></div>
<div class="th" style="left:97px;top:138px"><svg width="82" height="56" viewBox="0 0 82 56"><path class="W" d="M13.5 24.400H18V20L27.5 27.9L18 36.800V31.400H13.5Z"/><circle class="D" cx="10.5" cy="28.2" r="5.9"/><path class="kw" d="M7.25 28.5H13.75"/><path class="W" d="M38.5 24.400H43V20L52.5 27.9L43 36.800V31.400H38.5Z"/><circle class="M" cx="35.5" cy="28.2" r="5.9"/><path class="k" d="M32.25 28.5H38.75"/><path class="W" d="M63.5 24.400H68.3V20L77.8 27.9L68.3 36.800V31.400H63.5Z"/><circle class="L" cx="60.5" cy="28.2" r="5.9"/><path class="k" d="M57.25 28.5H63.75"/></svg></div>
<div class="th" style="left:189px;top:138px"><svg width="82" height="56" viewBox="0 0 82 56"><circle class="M" cx="19.9" cy="28.2" r="6.5"/><path class="k" d="M24 18.9L29.1 12.8M25 37.9L29.7 32.3M31 37.9L36 32.3"/><circle class="kf" cx="31" cy="28.2" r="2"/><circle class="kf" cx="37" cy="28.2" r="2"/><circle class="M" cx="49.9" cy="28.2" r="6.5"/><path class="k" d="M54 18.9L59.1 12.8M55 37.9L59.7 32.3M61 37.9L66 32.3"/><circle class="L" cx="61" cy="28.2" r="1.7"/><circle class="L" cx="67" cy="28.2" r="1.7"/></svg></div>
<div class="th" style="left:281px;top:138px"><svg width="82" height="56" viewBox="0 0 82 56"><path class="W" d="M12.3 22.2H56.6V16.500Q56.6 15.200 57.6 16L70 27.8L57.6 39.600Q56.6 40.400 56.600 39.100V33.4H12.3L17.8 27.8Z" style="stroke:#5c7fc0"/><circle class="D" cx="26" cy="27.8" r="3.6"/><circle class="M" cx="38" cy="27.8" r="3.6"/><circle class="L" cx="49.8" cy="27.8" r="3.6"/><path class="k" d="M23.1 18.5H28.9"/><path class="k" d="M46.9 18.5H52.8"/><path class="k" d="M35.1 37.5H41"/></svg></div>
<div class="th" style="left:373px;top:138px"><svg width="82" height="56" viewBox="0 0 82 56"><path class="D" d="M6.2 21.2H26.5L31.5 27.9L26.5 34.6H6.2L11.5 27.9Z"/><path class="kw" d="M15.85 28.5H23.85"/><path class="M" d="M28.6 21.2H48.7L53.7 27.9L48.7 34.6H28.6L33.9 27.9Z"/><path class="k" d="M38.15 28.5H46.15"/><path class="L" d="M50.5 21.2H70.8L75.8 27.9L70.8 34.6H50.5L55.8 27.9Z"/><path class="k" d="M60.15 28.5H68.15"/></svg></div>
<div class="th" style="left:5px;top:204px"><svg width="82" height="56" viewBox="0 0 82 56"><path class="L" d="M8.1 21.3H68.3L73.6 27.9L68.3 34.5H8.1Z"/><path class="M" d="M8.1 21.3H48.1L53.4 27.9L48.1 34.5H8.1Z"/><path class="D" d="M8.1 21.3H28.3L33.6 27.9L28.3 34.5H8.1Z"/><path class="kw" d="M17.5 28.5H25"/><path class="k" d="M38 28.5H45.5"/><path class="k" d="M58 28.5H65.5"/></svg></div>
<div class="th" style="left:97px;top:204px"><svg width="82" height="56" viewBox="0 0 82 56"><path class="W" d="M16 6.2H63.3L68.6 12.8L63.3 19.4H16Z"/><path class="D" d="M13.700 6.2H33.400L38.400 12.8L33.400 19.4H13.700L18.700 12.8Z"/><path class="kw" d="M23 13.5H31"/><path class="k" d="M43 13.5H48.5"/><path class="W" d="M16 21.3H63.3L68.6 27.9L63.3 34.5H16Z"/><path class="M" d="M13.700 21.3H33.400L38.400 27.9L33.400 34.5H13.700L18.700 27.9Z"/><path class="k" d="M23 28.5H31"/><path class="k" d="M43 28.5H48.5"/><path class="W" d="M16 36.4H63.3L68.6 43L63.3 49.6H16Z"/><path class="L" d="M13.700 36.4H33.400L38.400 43L33.400 49.6H13.700L18.700 43Z"/><path class="k" d="M23 43.5H31"/><path class="k" d="M43 43.5H48.5"/></svg></div>
<div class="th" style="left:189px;top:204px"><svg width="82" height="56" viewBox="0 0 82 56"><path class="D" d="M18 9L24.800 14L31.600 9V19.4L24.800 24.6L18 19.4Z"/><path class="kw" d="M22 18.5H27.6"/><rect class="W" x="34.5" y="9.5" width="28" height="8"/><circle cx="37.5" cy="13.8" r=".9" fill="#fff" stroke="#4a68a6" stroke-width=".8"/><path class="k" d="M41 14.5H47.8"/><path class="M" d="M18 21.3L24.800 26.3L31.600 21.3V31.7L24.800 36.9L18 31.7Z"/><path class="k" d="M22 30.5H27.6"/><rect class="W" x="34.5" y="21.5" width="28" height="9"/><circle cx="37.5" cy="26.1" r=".9" fill="#fff" stroke="#4a68a6" stroke-width=".8"/><path class="k" d="M41 26.5H47.8"/><path class="L" d="M18 33.2L24.800 38.2L31.600 33.2V43.6L24.800 48.8L18 43.6Z"/><path class="k" d="M22 42.5H27.6"/><rect class="W" x="34.5" y="33.5" width="28" height="9"/><circle cx="37.5" cy="38" r=".9" fill="#fff" stroke="#4a68a6" stroke-width=".8"/><path class="k" d="M41 38.5H47.8"/></svg></div>
<div class="th" style="left:281px;top:204px"><svg width="82" height="56" viewBox="0 0 82 56"><path class="k" d="M22.300 21.700Q26 25 26.800 27.300Q26 29.600 22.300 32.900M41.200 21.700Q37.500 25 36.700 27.300Q37.500 29.600 41.200 32.900"/><circle cx="31.7" cy="27.3" r="5.4" fill="none" stroke="#4a68a6" stroke-width=".9" stroke-dasharray="2.4 2.4"/><circle class="D" cx="16.3" cy="27.3" r="7.8"/><path class="kw" d="M12.8 27.5H19.8"/><circle class="M" cx="47.5" cy="27.3" r="7.8"/><path class="k" d="M44 27.5H51"/><circle class="L" cx="65.5" cy="27.3" r="7.8"/><path class="k" d="M62 27.5H69"/></svg></div>
<div class="th" style="left:373px;top:204px"><svg width="82" height="56" viewBox="0 0 82 56"><circle class="M" cx="12.9" cy="23.9" r="1.1"/><circle class="L" cx="11.9" cy="28.9" r="1.3"/><circle class="kf" cx="18" cy="27.9" r="2"/><path class="k" d="M19.500 19Q25.600 27.9 19.500 36.800M29 19Q22.400 27.9 29 36.800M43 19Q49.600 27.9 43 36.800M53 19Q46.400 27.9 53 36.800"/><circle class="L" cx="39.1" cy="27.9" r="3.3"/><path class="k" d="M37.6 28.5H40.6"/><circle class="D" cx="32.8" cy="27.9" r="3.6"/><path class="kw" d="M31.3 28.5H34.3"/><circle class="D" cx="61.9" cy="27.9" r="8.6"/><path class="kw" d="M57.9 28.5H65.9"/></svg></div>
<div class="th" style="left:5px;top:270px"><svg width="82" height="56" viewBox="0 0 82 56"><circle class="kf" cx="12.3" cy="17.2" r="1.2"/><circle class="kf" cx="17.6" cy="20.8" r="1.8"/><circle class="kf" cx="12.9" cy="23.8" r="1.8"/><circle class="kf" cx="22.7" cy="23.8" r="1.8"/><circle class="kf" cx="6.3" cy="28.4" r="1.3"/><circle class="kf" cx="23.3" cy="36.5" r="1.3"/><circle class="kf" cx="30.2" cy="27.4" r="1.4"/><circle class="M" cx="12.9" cy="30.8" r="1.2"/><circle class="M" cx="22.7" cy="30.8" r="1.2"/><circle class="M" cx="17.6" cy="34" r="1.3"/><path class="M" d="M30.800 21.300H35.800L40.800 27.900L35.800 34.500H30.800L35.800 27.900Z"/><path class="L" d="M39.700 21.300H45.600L50.600 27.900L45.600 34.500H39.700L44.700 27.900Z"/><circle class="D" cx="64" cy="28" r="8.6"/><path class="kw" d="M60 28.5H68"/><path class="k" d="M14.2 41.5H20.8"/><path class="k" d="M61 41.5H67.6"/></svg></div>
<div class="th" style="left:97px;top:270px"><svg width="82" height="56" viewBox="0 0 82 56"><rect class="D" x="33.5" y="4.5" width="15" height="9"/><path class="kw" d="M38.1 9.5H43.6"/><path class="kf" d="M40.05 16.3V18.3H38L40.9 21.3L43.8 18.3H41.75V16.3Z"/><rect class="M" x="33.5" y="23.5" width="15" height="10"/><path class="k" d="M38.1 28.5H43.6"/><path class="kf" d="M40.05 35.3V37.3H38L40.9 40.3L43.8 37.3H41.75V35.3Z"/><rect class="L" x="33.5" y="42.5" width="15" height="9"/><path class="k" d="M38.1 47.5H43.6"/></svg></div>
<div class="th" style="left:189px;top:270px"><svg width="82" height="56" viewBox="0 0 82 56"><rect class="D" x="14.5" y="9.5" width="41" height="8"/><path class="kw" d="M18 13.5H27.5"/><rect class="M" x="20.5" y="23.5" width="41" height="7"/><path class="k" d="M24 27.5H33"/><rect class="L" x="26.5" y="37.5" width="41" height="7"/><path class="k" d="M30 41.5H39"/><path class="kf" d="M51.15 20.2V25.7H49.1L52 28.7L54.9 25.7H52.85V20.2Z"/><path class="kf" d="M57.15 34V39.5H55.1L58 42.5L60.9 39.5H58.85V34Z"/></svg></div>
<div class="th" style="left:281px;top:270px"><svg width="82" height="56" viewBox="0 0 82 56"><path class="k" d="M27.400 19.7V23.2M27.400 31.7V35.3M54.500 19.7V23.2M54.500 31.7V35.3"/><rect class="D" x="15.5" y="11.5" width="24" height="8"/><path class="kw" d="M23.35 15.5H31.35"/><rect class="M" x="42.5" y="11.5" width="24" height="8"/><path class="k" d="M50.5 15.5H58.5"/><rect class="L" x="15.5" y="23.5" width="24" height="8"/><path class="k" d="M23.35 27.5H31.35"/><rect class="L" x="42.5" y="23.5" width="24" height="8"/><path class="k" d="M50.5 27.5H58.5"/><rect class="L" x="15.5" y="35.5" width="24" height="8"/><path class="k" d="M23.35 39.5H31.35"/><rect class="L" x="42.5" y="35.5" width="24" height="8"/><path class="k" d="M50.5 39.5H58.5"/></svg></div>
<div class="th" style="left:373px;top:270px"><svg width="82" height="56" viewBox="0 0 82 56"><rect class="W" x="15.5" y="5.5" width="51" height="9" style="stroke:#42609d;stroke-width:1.1"/><rect class="D" x="15.5" y="5.5" width="51" height="3"/><path class="kw" d="M37 7.5H45"/><rect class="W" x="15.5" y="23.5" width="51" height="9" style="stroke:#4a68a6;stroke-width:1"/><rect class="M" x="16.5" y="24.5" width="49" height="2" style="stroke:none"/><path class="k" d="M37 25.5H45"/><rect class="W" x="15.5" y="41.5" width="51" height="9" style="stroke:#8fb4e6"/><rect class="L" x="16.5" y="42.5" width="49" height="2" style="stroke:none"/><path class="k" d="M37 43.5H45"/><path class="kf" d="M40 13.4V18.2H37.6L41 21.8L44.4 18.2H42V13.4Z"/><path class="kf" d="M40 31.5V36.3H37.6L41 39.9L44.4 36.3H42V31.5Z"/></svg></div>
<div class="th" style="left:5px;top:336px"><svg width="82" height="56" viewBox="0 0 82 56"><path class="M" d="M32.4 15.1A9.1 9.1 0 1 1 46.32 22.82L44.89 20.53A6.4 6.4 0 1 0 35.1 15.1Z"/><path class="M" d="M42.2 18.2L42.2 24.7L48.8 24.7Z"/><path class="M" d="M32.4 15.1A9.1 9.1 0 1 1 46.32 22.82L44.89 20.53A6.4 6.4 0 1 0 35.1 15.1Z" style="stroke:none"/><path class="M" d="M42.2 18.2L42.2 24.7L48.8 24.7Z" style="stroke:none"/><path class="M" d="M40.9 21.13A9.1 9.1 0 1 0 32.49 36.95L33.32 34.39A6.4 6.4 0 1 1 39.24 23.26Z"/><path class="M" d="M34.9 31.4L34.9 38L28 38Z"/><path class="M" d="M40.9 21.13A9.1 9.1 0 1 0 32.49 36.95L33.32 34.39A6.4 6.4 0 1 1 39.24 23.26Z" style="stroke:none"/><path class="M" d="M34.9 31.4L34.9 38L28 38Z" style="stroke:none"/><path class="M" d="M35.9 33.13A9.1 9.1 0 1 1 32.4 40.3L35.1 40.3A6.4 6.4 0 1 0 37.56 35.26Z"/><path class="k" d="M37.8 15.5H44"/><path class="k" d="M32 28.5H38"/><path class="k" d="M39 40.5H44.8"/></svg></div>
<div class="th" style="left:97px;top:336px"><svg width="82" height="56" viewBox="0 0 82 56"><rect class="D" x="20.5" y="7.5" width="17" height="10"/><path class="kw" d="M25.55 12.5H32.55"/><rect class="D" x="44.5" y="7.5" width="17" height="10"/><path class="kw" d="M49.4 12.5H56.4"/><rect class="M" x="20.5" y="23.5" width="17" height="10"/><path class="k" d="M25.55 28.5H32.55"/><rect class="M" x="44.5" y="23.5" width="17" height="10"/><path class="k" d="M49.4 28.5H56.4"/><rect class="L" x="20.5" y="39.5" width="17" height="10"/><path class="k" d="M25.55 44.5H32.55"/><path class="kf" d="M39.8 10.4L42.8 12.4L39.8 14.4Z"/><path class="kf" d="M51.1 19L55.5 19L53.3 21.6Z"/><path class="kf" d="M42.8 26.4L39.8 28.4L42.8 30.4Z"/><path class="kf" d="M26.6 35.3L31 35.3L28.8 37.9Z"/></svg></div>
<div class="th" style="left:189px;top:336px"><svg width="82" height="56" viewBox="0 0 82 56"><rect class="D" x="20.5" y="7.5" width="17" height="10"/><path class="kw" d="M25.55 12.5H32.55"/><rect class="D" x="44.5" y="7.5" width="17" height="10"/><path class="kw" d="M49.4 12.5H56.4"/><rect class="M" x="20.5" y="23.5" width="17" height="10"/><path class="k" d="M25.55 28.5H32.55"/><rect class="M" x="44.5" y="23.5" width="17" height="10"/><path class="k" d="M49.4 28.5H56.4"/><rect class="L" x="20.5" y="39.5" width="17" height="10"/><path class="k" d="M25.55 44.5H32.55"/><path class="kf" d="M39.8 10.4L42.8 12.4L39.8 14.4Z"/><path class="kf" d="M39.8 26.4L42.8 28.4L39.8 30.4Z"/><path class="kf" d="M26.2 19L30.6 19L28.4 21.6Z"/><path class="kf" d="M26.2 35.3L30.6 35.3L28.4 37.9Z"/><path class="k" d="M54.500 17.500V19Q54.500 20.500 53 20.500H32M54.500 33.600V35Q54.500 36.500 53 36.500H32"/></svg></div>
<div class="th" style="left:281px;top:336px"><svg width="82" height="56" viewBox="0 0 82 56"><path class="k" d="M21 19.7V24.1M21 32.7V37.2M40.600 19.7V24.1M40.600 32.7V37.2M60.400 19.7V24.1M60.400 32.7V37.2M28.800 41.500H33.200M48.800 15.400H53.200"/><rect class="D" x="13.5" y="11.5" width="15" height="8"/><path class="kw" d="M17.65 15.5H24.15"/><rect class="D" x="13.5" y="24.5" width="15" height="8"/><path class="kw" d="M17.65 28.5H24.15"/><rect class="D" x="13.5" y="37.5" width="15" height="8"/><path class="kw" d="M17.65 41.5H24.15"/><rect class="M" x="33.5" y="11.5" width="15" height="8"/><path class="k" d="M37.75 15.5H44.25"/><rect class="M" x="33.5" y="24.5" width="15" height="8"/><path class="k" d="M37.75 28.5H44.25"/><rect class="M" x="33.5" y="37.5" width="15" height="8"/><path class="k" d="M37.75 41.5H44.25"/><rect class="L" x="53.5" y="11.5" width="15" height="8"/><path class="k" d="M57.75 15.5H64.25"/><rect class="L" x="53.5" y="24.5" width="15" height="8"/><path class="k" d="M57.75 28.5H64.25"/><rect class="L" x="53.5" y="37.5" width="15" height="8"/><path class="k" d="M57.75 41.5H64.25"/></svg></div>
<div class="th" style="left:373px;top:336px"><svg width="82" height="56" viewBox="0 0 82 56"><rect class="M" x="18.5" y="10.5" width="13" height="35"/><rect class="M" x="34.5" y="10.5" width="13" height="35"/><rect class="L" x="50.5" y="10.5" width="13" height="35"/><circle cx="25" cy="17.2" r="4" fill="#fff"/><path class="k" d="M21 30.5H29"/><circle cx="41" cy="17.2" r="4" fill="#fff"/><path class="k" d="M37 30.5H45"/><circle cx="57" cy="17.2" r="4" fill="#fff"/><path class="k" d="M53 30.5H61"/><path class="kf" d="M21 38.400L26 33.900V37.400H56V33.900L61 38.400L56 42.900V39.400H26V42.900Z"/></svg></div>
<div class="th" style="left:5px;top:402px"><svg width="82" height="56" viewBox="0 0 82 56"><rect class="D" x="14.5" y="16.5" width="13" height="23"/><rect class="M" x="34.5" y="16.5" width="12" height="23"/><rect class="L" x="54.5" y="16.5" width="13" height="23"/><path class="kw" d="M17 22.5H24.5"/><path class="k" d="M37 22.5H44.5"/><path class="k" d="M57.2 22.5H64.7"/><path d="M26 25.100L34.900 31.400L26 37.900Z" fill="#fff" stroke="#8fb4e6" stroke-width=".8"/><path d="M46 25.100L54.900 31.400L46 37.900Z" fill="#fff" stroke="#9dbde8" stroke-width=".8"/></svg></div>
<div class="th" style="left:97px;top:402px"><svg width="82" height="56" viewBox="0 0 82 56"><path class="W" d="M31 12.5H52.900V7.7L66.100 17.4L52.900 27V22.3H31Z"/><rect class="D" x="17.5" y="11.5" width="14" height="12"/><path class="kw" d="M21.4 17.5H27.4"/><path class="k" d="M34.3 16.5H35.5"/><path class="k" d="M37.5 16.5H45"/><path class="k" d="M34.3 19.5H35.5"/><path class="k" d="M37.5 19.5H45"/><path class="W" d="M31 33.5H52.900V28.7L66.100 38.4L52.900 48V43.3H31Z"/><rect class="M" x="17.5" y="32.5" width="14" height="12"/><path class="k" d="M21.4 38.5H27.4"/><path class="k" d="M34.3 37.5H35.5"/><path class="k" d="M37.5 37.5H45"/><path class="k" d="M34.3 40.5H35.5"/><path class="k" d="M37.5 40.5H45"/></svg></div>
<div class="th" style="left:189px;top:402px"><svg width="82" height="56" viewBox="0 0 82 56"><rect class="D" x="34.5" y="23.5" width="30" height="7"/><rect class="M" x="24.5" y="36.5" width="30" height="7"/><circle cx="31.600" cy="25.700" r="4.300" fill="#fff" stroke="#4a68a6" stroke-width=".9"/><circle cx="21.800" cy="38.900" r="4.300" fill="#fff" stroke="#5c8bd0" stroke-width=".9"/><path d="M32 19V9M27.500 12.500L32 8L36.500 12.500" fill="none" stroke="#4a68a6" stroke-width="1.300" stroke-dasharray="1.300 1.300"/><circle class="kf" cx="27.8" cy="32.6" r="0.7"/></svg></div>
<div class="th" style="left:281px;top:402px"><svg width="82" height="56" viewBox="0 0 82 56"><path class="M" d="M12.100 41.800C20 27 40 19.500 57 18.400V13.200Q57 11.400 58.400 12.600L70.600 22.800Q71.400 23.500 70.600 24.200L58.400 34.400Q57.200 35.400 57.100 33.800L57 28.500C40 28.500 24 32 12.100 41.800Z"/><circle class="kf" cx="22" cy="32" r="0.9"/><circle class="kf" cx="35" cy="26.9" r="2"/><circle class="kf" cx="49.9" cy="23.9" r="3"/><path class="k" d="M21 38.5H27.9"/><path class="k" d="M33 34.5H40"/><path class="k" d="M46.9 32.5H53.9"/></svg></div>
<div class="th" style="left:373px;top:402px"><svg width="82" height="56" viewBox="0 0 82 56"><path class="M" d="M17.600 6.400C33 8 47 15 51.800 36.800H56.700Q58.500 36.800 57.300 38.200L47 49.200Q46.300 50 45.600 49.200L35.300 38.200Q34.100 36.800 35.900 36.800H41.600C41 22 33 10 17.600 6.400Z"/><path class="k" d="M31.1 5.5H39.7"/><path class="k" d="M47.1 15.5H55.8"/><path class="k" d="M27.1 22.5H35.7"/><path class="k" d="M55.2 30.5H63.8"/><path class="k" d="M42.3 52.5H50.8"/></svg></div>
<div class="th" style="left:5px;top:468px"><svg width="82" height="56" viewBox="0 0 82 56"><circle class="D" cx="24.2" cy="11.3" r="6"/><path class="kw" d="M21.2 11.5H27.2"/><circle class="M" cx="40.2" cy="11.3" r="3.9"/><path class="k" d="M38.4 11.5H42"/><circle class="M" cx="56.2" cy="11.3" r="3.9"/><path class="k" d="M54.4 11.5H58"/><circle class="M" cx="24.2" cy="27.4" r="3.8"/><path class="k" d="M22.4 27.5H26"/><circle class="M" cx="40.2" cy="27.4" r="3.8"/><path class="k" d="M38.4 27.5H42"/><circle class="M" cx="56.2" cy="27.4" r="3.8"/><path class="k" d="M54.4 27.5H58"/><path class="kf" d="M47 9L49.8 11.3L47 13.6Z"/><path class="kf" d="M21.9 19.2L26.5 19.2L24.2 21.6Z"/><path class="kf" d="M37.9 20.8L42.5 20.8L40.2 18.4Z"/><path class="kf" d="M53.9 18.6L58.5 18.6L56.2 21Z"/></svg></div>
<div class="th" style="left:97px;top:468px"><svg width="82" height="56" viewBox="0 0 82 56"><circle class="D" cx="18.4" cy="27.4" r="6"/><path class="kw" d="M15.4 27.5H21.4"/><circle class="M" cx="40.3" cy="27.4" r="6"/><path class="k" d="M37.3 27.5H43.3"/><circle class="L" cx="62.4" cy="27.4" r="6"/><path class="k" d="M59.4 27.5H65.4"/><path class="k" d="M27 27.400H31.600M29.300 25.100V29.700M49.100 26.400H53.700M49.100 28.600H53.700"/></svg></div>
<div class="th" style="left:189px;top:468px"><svg width="82" height="56" viewBox="0 0 82 56"><circle class="D" cx="23.5" cy="15.1" r="6"/><path class="kw" d="M20.5 15.5H26.5"/><circle class="L" cx="57.5" cy="27.4" r="10"/><path class="k" d="M52.5 27.5H62.5"/><path class="k" d="M21.200 27.700H25.800M23.500 25.400V30"/><path class="kf" d="M34.4 27.05H38.6V25L42 28L38.6 31V28.95H34.4Z"/></svg></div>
<div class="th" style="left:281px;top:468px"><svg width="82" height="56" viewBox="0 0 82 56"><path d="M16.200 13.900L27.200 32.800L32 41H50L54.500 32.800L65.700 13.900A24.900 8.750 0 0 1 16.200 13.900Z" fill="#e7f0fb" stroke="#8fb4e6" stroke-width=".8"/><ellipse cx="41" cy="12.900" rx="24.900" ry="8.750" fill="#fff" stroke="#8fb4e6" stroke-width=".8"/><circle class="L" cx="43.3" cy="30" r="6.6"/><path class="k" d="M40.3 30.5H46.3"/><circle class="M" cx="46.5" cy="14.3" r="6.95"/><path class="k" d="M43.5 14.5H49.5"/><circle class="D" cx="31.4" cy="20.2" r="6.95"/><path class="kw" d="M28.4 20.5H34.4"/><path d="M16.200 14.500A24.900 8.750 0 0 0 65.700 14.500L54.500 32.800L50 41H32L27.200 32.800Z" fill="#dce9f9" fill-opacity=".55" stroke="#8fb4e6" stroke-width=".8"/></svg></div>
<div class="th" style="left:373px;top:468px"><svg width="82" height="56" viewBox="0 0 82 56"><path class="L" d="M47.51 14.99L49.38 16.22L48.57 18.18L46.37 17.73L44.83 19.27L45.28 21.47L43.32 22.28L42.09 20.41L39.91 20.41L38.68 22.28L36.72 21.47L37.17 19.27L35.63 17.73L33.43 18.18L32.62 16.22L34.49 14.99L34.49 12.81L32.62 11.58L33.43 9.62L35.63 10.07L37.17 8.53L36.72 6.33L38.68 5.52L39.91 7.39L42.09 7.39L43.32 5.52L45.28 6.33L44.83 8.53L46.37 10.07L48.57 9.62L49.38 11.58L47.51 12.81Z"/><path class="k" d="M38.25 14.5H43.75"/><path class="M" d="M34.03 23.32L36.24 23.74L36.24 25.86L34.03 26.28L33.2 28.3L34.46 30.16L32.96 31.66L31.1 30.4L29.08 31.23L28.66 33.44L26.54 33.44L26.12 31.23L24.1 30.4L22.24 31.66L20.74 30.16L22 28.3L21.17 26.28L18.96 25.86L18.96 23.74L21.17 23.32L22 21.3L20.74 19.44L22.24 17.94L24.1 19.2L26.12 18.37L26.54 16.16L28.66 16.16L29.08 18.37L31.1 19.2L32.96 17.94L34.46 19.44L33.2 21.3Z"/><path class="k" d="M24.85 25.5H30.35"/><path class="D" d="M54.99 36.05L57.4 37.61L56.39 40.07L53.58 39.46L51.66 41.38L52.27 44.19L49.81 45.2L48.25 42.79L45.55 42.79L43.99 45.2L41.53 44.19L42.14 41.38L40.22 39.46L37.41 40.07L36.4 37.61L38.81 36.05L38.81 33.35L36.4 31.79L37.41 29.33L40.22 29.94L42.14 28.02L41.53 25.21L43.99 24.2L45.55 26.61L48.25 26.61L49.81 24.2L52.27 25.21L51.66 28.02L53.58 29.94L56.39 29.33L57.4 31.79L54.99 33.35Z"/><path class="k" d="M29.500 9.500Q31 6 33.800 4M15 24Q16 13.500 28.500 12M51 19.500Q60 22 63.500 33"/></svg></div>
</div></div>
<div id="tip">Basic Process</div>
<div class="badge" style="left:618px;top:176px;z-index:40">4</div>
</body></html>
